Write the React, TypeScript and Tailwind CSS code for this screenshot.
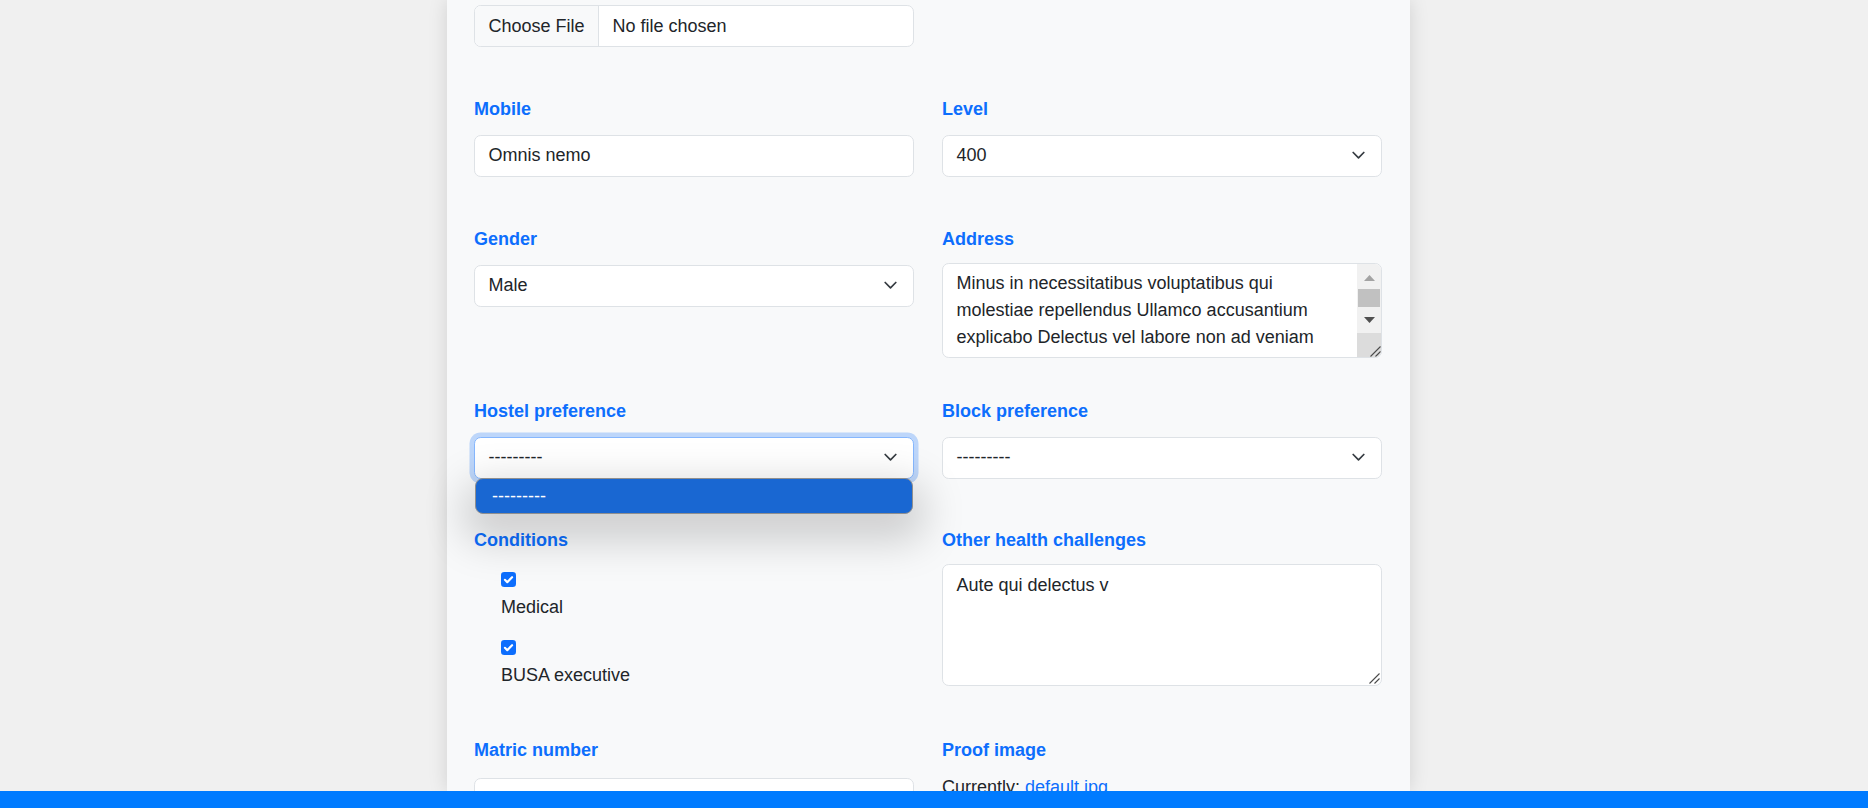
import React from "react";

const FONT = "font-['Liberation_Sans',Arial,Helvetica,sans-serif]";

function Label({ children }: { children: React.ReactNode }) {
  return (
    <div className="h-[27px] leading-[27px] font-bold text-[#0d6efd] whitespace-nowrap">
      {children}
    </div>
  );
}

function Chevron() {
  return (
    <svg width="13" height="9" viewBox="0 0 13 9" className="shrink-0">
      <polyline
        points="1.2,1.5 6.5,6.8 11.8,1.5"
        fill="none"
        stroke="#343a40"
        strokeWidth="1.7"
        strokeLinecap="round"
        strokeLinejoin="round"
      />
    </svg>
  );
}

function Select({ value, focused = false }: { value: string; focused?: boolean }) {
  return (
    <div
      className={
        focused
          ? "h-[42px] rounded-[6.75px] border border-[#86b7fe] bg-white pl-[13.5px] pr-[16px] flex items-center justify-between shadow-[0_0_0_4.5px_rgba(13,110,253,0.25)]"
          : "h-[42px] rounded-[6.75px] border border-[#dee2e6] bg-white pl-[13.5px] pr-[16px] flex items-center justify-between"
      }
    >
      <span className="whitespace-nowrap">{value}</span>
      <Chevron />
    </div>
  );
}

function Grip() {
  return (
    <svg width="12" height="12" viewBox="0 0 12 12">
      <line x1="11.5" y1="1.5" x2="1.5" y2="11.5" stroke="#4a4a4a" strokeWidth="1.1" />
      <line x1="11.5" y1="6.5" x2="6.5" y2="11.5" stroke="#4a4a4a" strokeWidth="1.1" />
    </svg>
  );
}

function Check() {
  return (
    <div className="w-[15px] h-[15px] rounded-[3.3px] bg-[#0d6efd] flex items-center justify-center">
      <svg width="13" height="13" viewBox="0 0 20 20">
        <path d="m4.5 10.5 3.6 3.6 7.4-7.6" fill="none" stroke="#fff" strokeWidth="3.3" strokeLinecap="round" strokeLinejoin="round" />
      </svg>
    </div>
  );
}

export default function App() {
  return (
    <div className={`h-[808px] w-full overflow-hidden bg-[#f0f0f0] flex flex-col ${FONT} text-[18px] leading-[27px] text-[#212529]`}>
      <div className="flex-1 min-h-0 overflow-hidden pl-[447px]">
        <div className="w-[963px] h-full bg-[#f8f9fa] shadow-[0_0_18px_rgba(0,0,0,0.13)] pl-[27px] pr-[28px] pt-[5px]">
          {/* File input row */}
          <div className="grid grid-cols-2 gap-x-[28px]">
            <div className="h-[42px] rounded-[6.75px] border border-[#dee2e6] bg-white flex items-stretch overflow-hidden">
              <div className="bg-[#f8f9fa] border-r border-[#dee2e6] px-[13.5px] flex items-center whitespace-nowrap">
                Choose File
              </div>
              <div className="pl-[13.5px] flex items-center whitespace-nowrap">No file chosen</div>
            </div>
            <div />
          </div>

          {/* Mobile / Level */}
          <div className="grid grid-cols-2 gap-x-[28px] mt-[49.3px]">
            <div>
              <Label>Mobile</Label>
              <div className="mt-[11.7px] h-[42px] rounded-[6.75px] border border-[#dee2e6] bg-white px-[13.5px] flex items-center">
                Omnis nemo
              </div>
            </div>
            <div>
              <Label>Level</Label>
              <div className="mt-[11.7px]">
                <Select value="400" />
              </div>
            </div>
          </div>

          {/* Gender / Address */}
          <div className="grid grid-cols-2 gap-x-[28px] mt-[49px]">
            <div>
              <Label>Gender</Label>
              <div className="mt-[12px]">
                <Select value="Male" />
              </div>
            </div>
            <div>
              <Label>Address</Label>
              <div className="mt-[10.3px] h-[94.7px] rounded-[6.75px] border border-[#dee2e6] bg-white flex overflow-hidden">
                <div className="flex-1 min-w-0 pl-[13.5px] pt-[5.7px] overflow-hidden">
                  <div className="whitespace-nowrap">Minus in necessitatibus voluptatibus qui</div>
                  <div className="whitespace-nowrap">molestiae repellendus Ullamco accusantium</div>
                  <div className="whitespace-nowrap">explicabo Delectus vel labore non ad veniam</div>
                </div>
                <div className="w-[24px] bg-[#f1f1f1] flex flex-col shrink-0">
                  <div className="h-[25px] flex items-center justify-center pt-[2px]">
                    <svg width="11" height="6" viewBox="0 0 11 6">
                      <polygon points="0,6 11,6 5.5,0" fill="#a3a3a3" />
                    </svg>
                  </div>
                  <div className="h-[18px] mx-[1px] bg-[#c1c1c1]" />
                  <div className="h-[26px] flex items-center justify-center">
                    <svg width="11" height="6" viewBox="0 0 11 6">
                      <polygon points="0,0 11,0 5.5,6" fill="#505050" />
                    </svg>
                  </div>
                  <div className="flex-1 bg-[#dcdcdc] flex items-end justify-end">
                    <Grip />
                  </div>
                </div>
              </div>
            </div>
          </div>

          {/* Hostel / Block */}
          <div className="grid grid-cols-2 gap-x-[28px] mt-[40.3px]">
            <div>
              <Label>Hostel preference</Label>
              <div className="mt-[11.4px] relative">
                <Select value="---------" focused />
                <div className="absolute top-[41.3px] left-[1px] right-[1.5px] h-[36px] rounded-[8px] border border-[#8f8f8f] bg-[#1967d2] text-white pl-[16px] pt-[2px] flex items-center shadow-[0_16px_40px_12px_rgba(0,0,0,0.17)] z-10">
                  ---------
                </div>
              </div>
            </div>
            <div>
              <Label>Block preference</Label>
              <div className="mt-[11.4px]">
                <Select value="---------" />
              </div>
            </div>
          </div>

          {/* Conditions / Other health */}
          <div className="grid grid-cols-2 gap-x-[28px] mt-[48.6px]">
            <div>
              <Label>Conditions</Label>
              <div className="pl-[27px]">
                <div className="mt-[17.7px]">
                  <Check />
                </div>
                <div className="mt-[7.5px]">Medical</div>
                <div className="mt-[18.5px]">
                  <Check />
                </div>
                <div className="mt-[7px]">BUSA executive</div>
              </div>
            </div>
            <div>
              <Label>Other health challenges</Label>
              <div className="mt-[10px] h-[122px] rounded-[6.75px] border border-[#dee2e6] bg-white pl-[13.5px] pt-[6.3px] flex flex-col">
                <div className="flex-1">Aute qui delectus v</div>
                <div className="flex justify-end pr-[1px] pb-[1px]">
                  <Grip />
                </div>
              </div>
            </div>
          </div>

          {/* Matric / Proof */}
          <div className="grid grid-cols-2 gap-x-[28px] mt-[47.8px]">
            <div>
              <Label>Matric number</Label>
              <div className="mt-[14.5px] h-[42px] rounded-[6.75px] border border-[#dee2e6] bg-white" />
            </div>
            <div>
              <Label>Proof image</Label>
              <div className="mt-[10.2px] whitespace-nowrap">
                Currently: <span className="text-[#0d6efd]">default.jpg</span>
              </div>
            </div>
          </div>
        </div>
      </div>
      <div className="h-[17px] shrink-0 bg-[#007bff] relative z-20" />
    </div>
  );
}
